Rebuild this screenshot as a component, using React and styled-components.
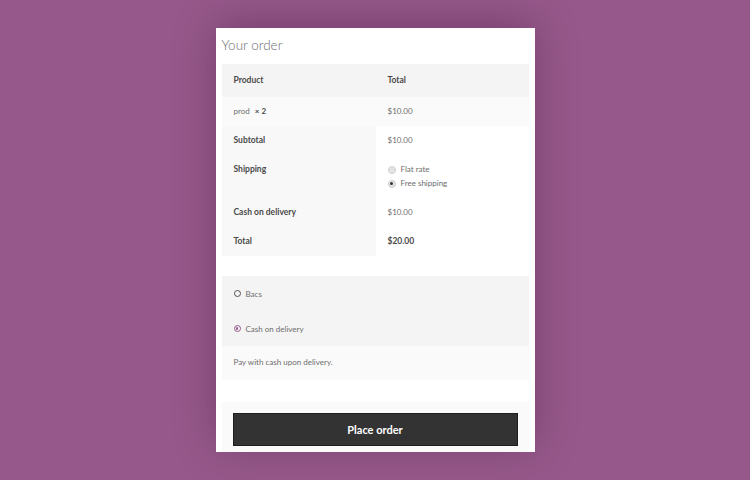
import React from 'react';
import styled, { createGlobalStyle } from 'styled-components';

const GlobalStyle = createGlobalStyle`
    html, body {
        margin: 0;
        padding: 0;
        background: #96588a;
        font-family: Lato, "Liberation Sans", sans-serif;
        -webkit-font-smoothing: antialiased;
    }
`;

const Page = styled.div`
    height: 480px;
    overflow: hidden;
    display: flex;
    justify-content: center;
    padding-top: 28px;
    box-sizing: border-box;
`;

const Card = styled.div`
    width: 319px;
    height: 424px;
    overflow: hidden;
    background: #fff;
    padding: 0 6px;
    box-sizing: border-box;
    box-shadow: 0 -6px 40px rgba(40, 0, 40, 0.28);
`;

const Title = styled.h3`
    margin: 7px 0 9px;
    font-size: 13.5px;
    line-height: 20px;
    font-weight: 300;
    color: #6d6d6d;
`;

const Table = styled.table`
    width: 307px;
    border-collapse: collapse;
    table-layout: fixed;
    font-size: 8px;
`;

const HeadCell = styled.th`
    text-align: left;
    background: #f4f4f4;
    color: #4a4a4a;
    font-weight: 700;
    font-size: 8.5px;
    padding: 11px 11px 11px 12px;
    line-height: 11px;
    width: ${p => p.$w || 'auto'};
    box-sizing: border-box;
`;

const Cell = styled.td`
    padding: 9px 11px 9px 12px;
    line-height: 11px;
    vertical-align: top;
    color: ${p => (p.$bold ? '#4a4a4a' : '#6d6d6d')};
    background: ${p => (p.$alt ? '#fafafa' : '#fff')};
    font-weight: ${p => (p.$bold ? 700 : 400)};
    font-size: ${p => (p.$bold ? '8.5px' : '8px')};
`;

const RowHead = styled.th`
    text-align: left;
    vertical-align: top;
    padding: 9px 11px 9px 12px;
    line-height: 11px;
    background: #f8f8f8;
    color: #4a4a4a;
    font-weight: 700;
    font-size: 8.5px;
`;

const Qty = styled.strong`
    color: #4a4a4a;
    margin-left: 3px;
`;

const ShipList = styled.ul`
    list-style: none;
    margin: 0;
    padding: 0;
    display: flex;
    flex-direction: column;
    gap: 3px;
`;

const ShipItem = styled.li`
    display: flex;
    align-items: center;
    gap: 5px;
    height: 11px;
`;

const SmallRadio = styled.span`
    width: 6px;
    height: 6px;
    border-radius: 50%;
    background: #e4e4e4;
    border: 0.5px solid #cfcfcf;
    display: flex;
    align-items: center;
    justify-content: center;

    &::after {
        content: '';
        width: 3px;
        height: 3px;
        border-radius: 50%;
        background: ${p => (p.$checked ? '#333' : 'transparent')};
    }
`;

const Methods = styled.ul`
    list-style: none;
    margin: 20px 0 0;
    padding: 0;
    background: #f4f4f4;
`;

const Method = styled.li`
    display: flex;
    align-items: center;
    gap: 5px;
    padding: 12px 11px 12px 12px;
    height: 11px;
    font-size: 8px;
    color: #6d6d6d;
`;

const Radio = styled.span`
    width: 5px;
    height: 5px;
    border-radius: 50%;
    border: 1.6px solid ${p => (p.$checked ? '#96588a' : '#555')};
    display: flex;
    align-items: center;
    justify-content: center;

    &::after {
        content: '';
        width: 2.4px;
        height: 2.4px;
        border-radius: 50%;
        background: ${p => (p.$checked ? '#96588a' : 'transparent')};
    }
`;

const Description = styled.div`
    background: #fafafa;
    padding: 11px 11px 12px 12px;
    line-height: 11px;
    font-size: 8px;
    color: #6d6d6d;
`;

const PlaceArea = styled.div`
    margin-top: 22px;
    background: #fafafa;
    padding: 11px 11px 6px;
`;

const Button = styled.button`
    width: 100%;
    height: 33px;
    background: #333;
    border: 1px solid #1e1e1e;
    color: #fff;
    font-family: Lato, "Liberation Sans", sans-serif;
    font-weight: 700;
    font-size: 11px;
    padding: 0;
`;

export default function App() {
    return (
        <>
            <GlobalStyle />
            <Page>
                <Card>
                    <Title>Your order</Title>
                    <Table>
                        <thead>
                            <tr>
                                <HeadCell $w="154px">Product</HeadCell>
                                <HeadCell>Total</HeadCell>
                            </tr>
                        </thead>
                        <tbody>
                            <tr>
                                <Cell $alt>prod <Qty>× 2</Qty></Cell>
                                <Cell $alt>$10.00</Cell>
                            </tr>
                        </tbody>
                        <tfoot>
                            <tr>
                                <RowHead>Subtotal</RowHead>
                                <Cell>$10.00</Cell>
                            </tr>
                            <tr>
                                <RowHead>Shipping</RowHead>
                                <Cell>
                                    <ShipList>
                                        <ShipItem><SmallRadio />Flat rate</ShipItem>
                                        <ShipItem><SmallRadio $checked />Free shipping</ShipItem>
                                    </ShipList>
                                </Cell>
                            </tr>
                            <tr>
                                <RowHead>Cash on delivery</RowHead>
                                <Cell>$10.00</Cell>
                            </tr>
                            <tr>
                                <RowHead>Total</RowHead>
                                <Cell $bold>$20.00</Cell>
                            </tr>
                        </tfoot>
                    </Table>

                    <Methods>
                        <Method><Radio />Bacs</Method>
                        <Method><Radio $checked />Cash on delivery</Method>
                    </Methods>
                    <Description>Pay with cash upon delivery.</Description>

                    <PlaceArea>
                        <Button>Place order</Button>
                    </PlaceArea>
                </Card>
            </Page>
        </>
    );
}
